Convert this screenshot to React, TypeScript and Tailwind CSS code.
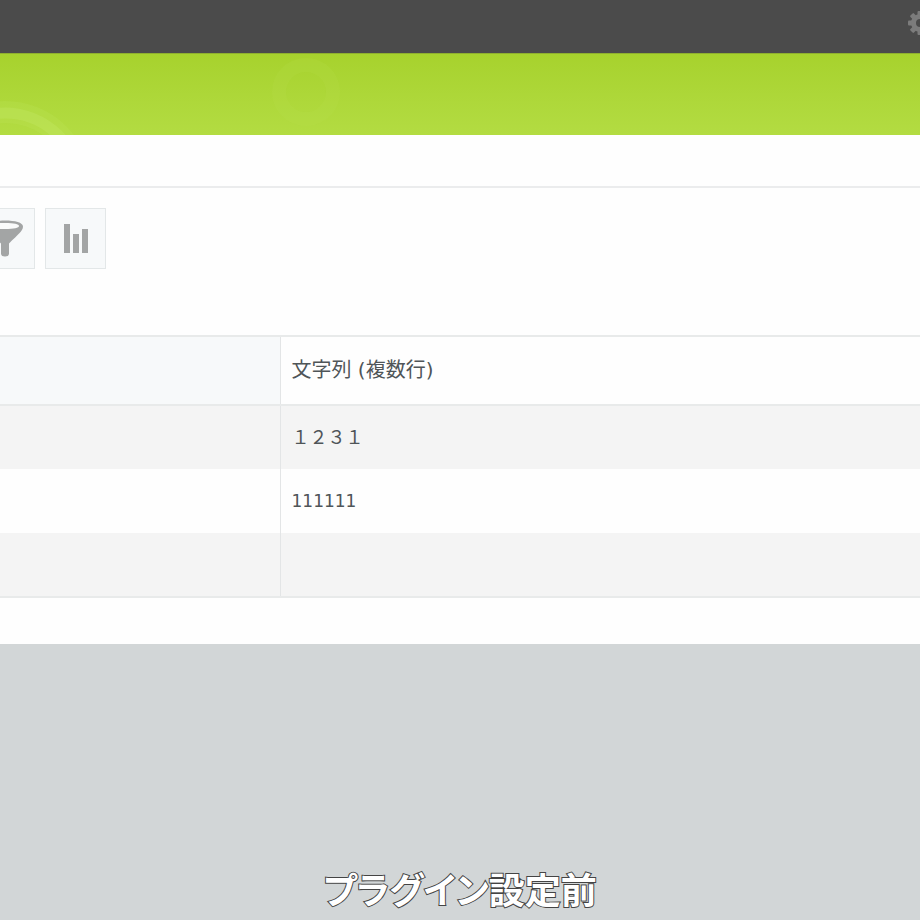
const rows = [
  { id: 1, value: '１２３１', className: 'bg-[#f4f4f4] text-lg' },
  { id: 2, value: '111111', className: 'bg-[#fefefe] text-[17px]' },
  { id: 3, value: '', className: 'bg-[#f4f4f4]' },
];

const toolButton =
  'flex size-[61px] shrink-0 items-center justify-center border border-[#e3e7e8] bg-[#f7f9fa]';

function GearIcon() {
  return (
    <svg viewBox="0 0 24 24" className="size-6" aria-hidden="true">
      <g fill="#7c7c7c">
        <rect x="9.5" y="0" width="5" height="24" rx="1" />
        <rect x="9.5" y="0" width="5" height="24" rx="1" transform="rotate(45 12 12)" />
        <rect x="9.5" y="0" width="5" height="24" rx="1" transform="rotate(90 12 12)" />
        <rect x="9.5" y="0" width="5" height="24" rx="1" transform="rotate(135 12 12)" />
        <circle cx="12" cy="12" r="9" />
      </g>
      <circle cx="12" cy="12" r="4" fill="#4b4b4b" />
    </svg>
  );
}

function FilterIcon() {
  return (
    <svg viewBox="0 0 36 38" className="h-[38px] w-9 shrink-0" aria-hidden="true">
      <path
        d="M0 6.5C0 2.500 8 0.500 18 0.500S36 2.500 36 6.500C36 11 31 14.500 22 23.500V33.500Q22 36.500 18 36.500T14 33.500V23.500C5 14.500 0 11 0 6.500Z"
        fill="#a3a5a5"
      />
      <path d="M3 6C3 4 9 3 18 3S32 4 32 6C32 8 27 9 18 9S3 8 3 6Z" fill="#fafbfb" />
    </svg>
  );
}

function ChartIcon() {
  return (
    <svg viewBox="0 0 24 29" className="h-[29px] w-6" fill="#a3a5a5" aria-hidden="true">
      <rect x="0" y="0" width="6" height="29" />
      <rect x="9" y="10" width="6" height="19" />
      <rect x="18" y="5" width="6" height="24" />
    </svg>
  );
}

function Banner() {
  return (
    <div className="h-[82px] overflow-hidden border-t border-[#8fb02f] bg-linear-to-b from-[#a7d22d] to-[#b3dc42]">
      <svg width="400" height="81" fill="none" aria-hidden="true">
        <circle cx="5" cy="134" r="76" stroke="#c4e765" strokeOpacity="0.18" strokeWidth="22" />
        <circle cx="5" cy="134" r="75" stroke="#c4e765" strokeOpacity="0.35" strokeWidth="11" />
        <circle cx="306" cy="38" r="27" stroke="#b9e04e" strokeOpacity="0.16" strokeWidth="14" />
      </svg>
    </div>
  );
}

export default function App() {
  return (
    <div className="flex min-h-screen flex-col overflow-hidden bg-[#d2d6d7] font-['DejaVu_Sans','Noto_Sans_CJK_JP',sans-serif] text-[#4f5558]">
      <header>
        <div className="flex h-[53px] items-start justify-end overflow-hidden bg-[#4b4b4b] pt-[11px]">
          <button type="button" aria-label="設定" className="-mr-3 shrink-0">
            <GearIcon />
          </button>
        </div>
        <Banner />
      </header>

      <main className="bg-[#fefefe] pb-[46px]">
        <div className="h-[53px] border-b-2 border-[#ebeced]" />

        <div className="flex gap-[10px] pt-5 pb-[66px]">
          <button type="button" aria-label="絞り込む" className={`${toolButton} -ml-[26px]`}>
            <FilterIcon />
          </button>
          <button type="button" aria-label="グラフ" className={toolButton}>
            <ChartIcon />
          </button>
        </div>

        <table className="w-full table-fixed border-collapse border-y-2 border-[#e8eaea] text-left">
          <colgroup>
            <col className="w-[280px]" />
            <col />
          </colgroup>
          <thead>
            <tr className="h-[69px] border-b-2 border-[#e8eaea]">
              <td className="border-r border-[#e3e5e6] bg-[#f7f9fa]" />
              <th scope="col" className="px-[11px] pb-0.5 text-xl leading-7 font-normal">
                文字列 (複数行)
              </th>
            </tr>
          </thead>
          <tbody>
            {rows.map((row) => (
              <tr key={row.id} className={`h-16 ${row.className}`}>
                <td className="border-r border-[#e3e5e6]" />
                <td className="px-[11px] leading-7">{row.value}</td>
              </tr>
            ))}
          </tbody>
        </table>
      </main>

      <p className="mt-auto pb-1 text-center font-['Noto_Sans_CJK_JP',sans-serif] text-4xl leading-[56px] font-bold text-white [font-feature-settings:'palt'] [-webkit-text-stroke:2px_#444] [paint-order:stroke_fill]">
        プラグイン設定前
      </p>
    </div>
  );
}
